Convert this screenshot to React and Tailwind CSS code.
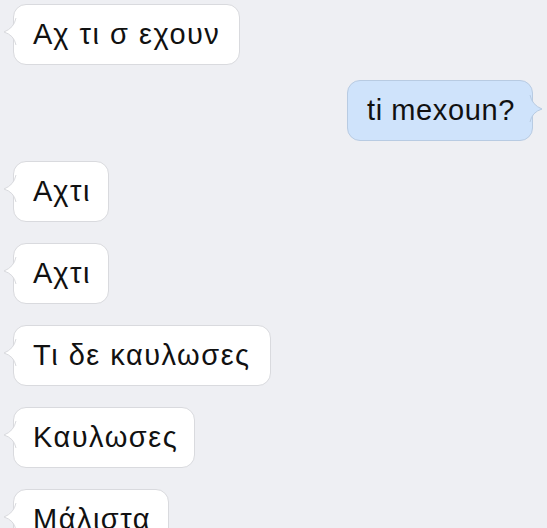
import React from "react";

const messages = [
  { id: 1, text: "Αχ τι σ εχουν", mine: false, mt: "mt-[4px]", w: "w-[227px]" },
  { id: 2, text: "ti mexoun?", mine: true, mt: "mt-[15px]", w: "w-[186px]" },
  { id: 3, text: "Αχτι", mine: false, mt: "mt-[20px]", w: "w-[96px]" },
  { id: 4, text: "Αχτι", mine: false, mt: "mt-[21px]", w: "w-[96px]" },
  { id: 5, text: "Τι δε καυλωσες", mine: false, mt: "mt-[21px]", w: "w-[258px]" },
  { id: 6, text: "Καυλωσες", mine: false, mt: "mt-[21px]", w: "w-[182px]" },
  { id: 7, text: "Μάλιστα", mine: false, mt: "mt-[21px]", w: "w-[156px]" },
];

const Tail = ({ mine }) => (
  <svg
    width="14"
    height="28"
    viewBox="0 0 14 28"
    className={
      mine
        ? "absolute right-[-11px] top-[14px] scale-x-[-1]"
        : "absolute left-[-11px] top-[13px]"
    }
  >
    <path
      d="M13 0 Q11 10 1 14 Q11 17 13 27"
      fill={mine ? "#cfe3fb" : "#ffffff"}
      stroke={mine ? "#b8cbe2" : "#d9dade"}
      strokeWidth="1"
    />
  </svg>
);

const Bubble = ({ text, mine, w }) => (
  <div
    className={`relative flex h-[61px] items-center rounded-[13px] border pl-[19px] ${w} ${
      mine ? "border-[#b8cbe2] bg-[#cfe3fb]" : "border-[#d9dade] bg-white"
    }`}
  >
    <Tail mine={mine} />
    <span
      className={`relative whitespace-nowrap text-[29px] leading-none text-[#111] [font-family:'Liberation_Sans',Arial,sans-serif] ${
        mine ? "tracking-[0.6px]" : "tracking-[1.5px]"
      }`}
    >
      {text}
    </span>
  </div>
);

const App = () => {
  return (
    <div className="h-[528px] w-[547px] overflow-hidden bg-[#eeeff3]">
      <div className="flex flex-col">
        {messages.map((m) => (
          <div
            key={m.id}
            className={`flex ${m.mt} ${
              m.mine ? "justify-end pr-[14px]" : "justify-start pl-[13px]"
            }`}
          >
            <Bubble text={m.text} mine={m.mine} w={m.w} />
          </div>
        ))}
      </div>
    </div>
  );
};

export default App;
